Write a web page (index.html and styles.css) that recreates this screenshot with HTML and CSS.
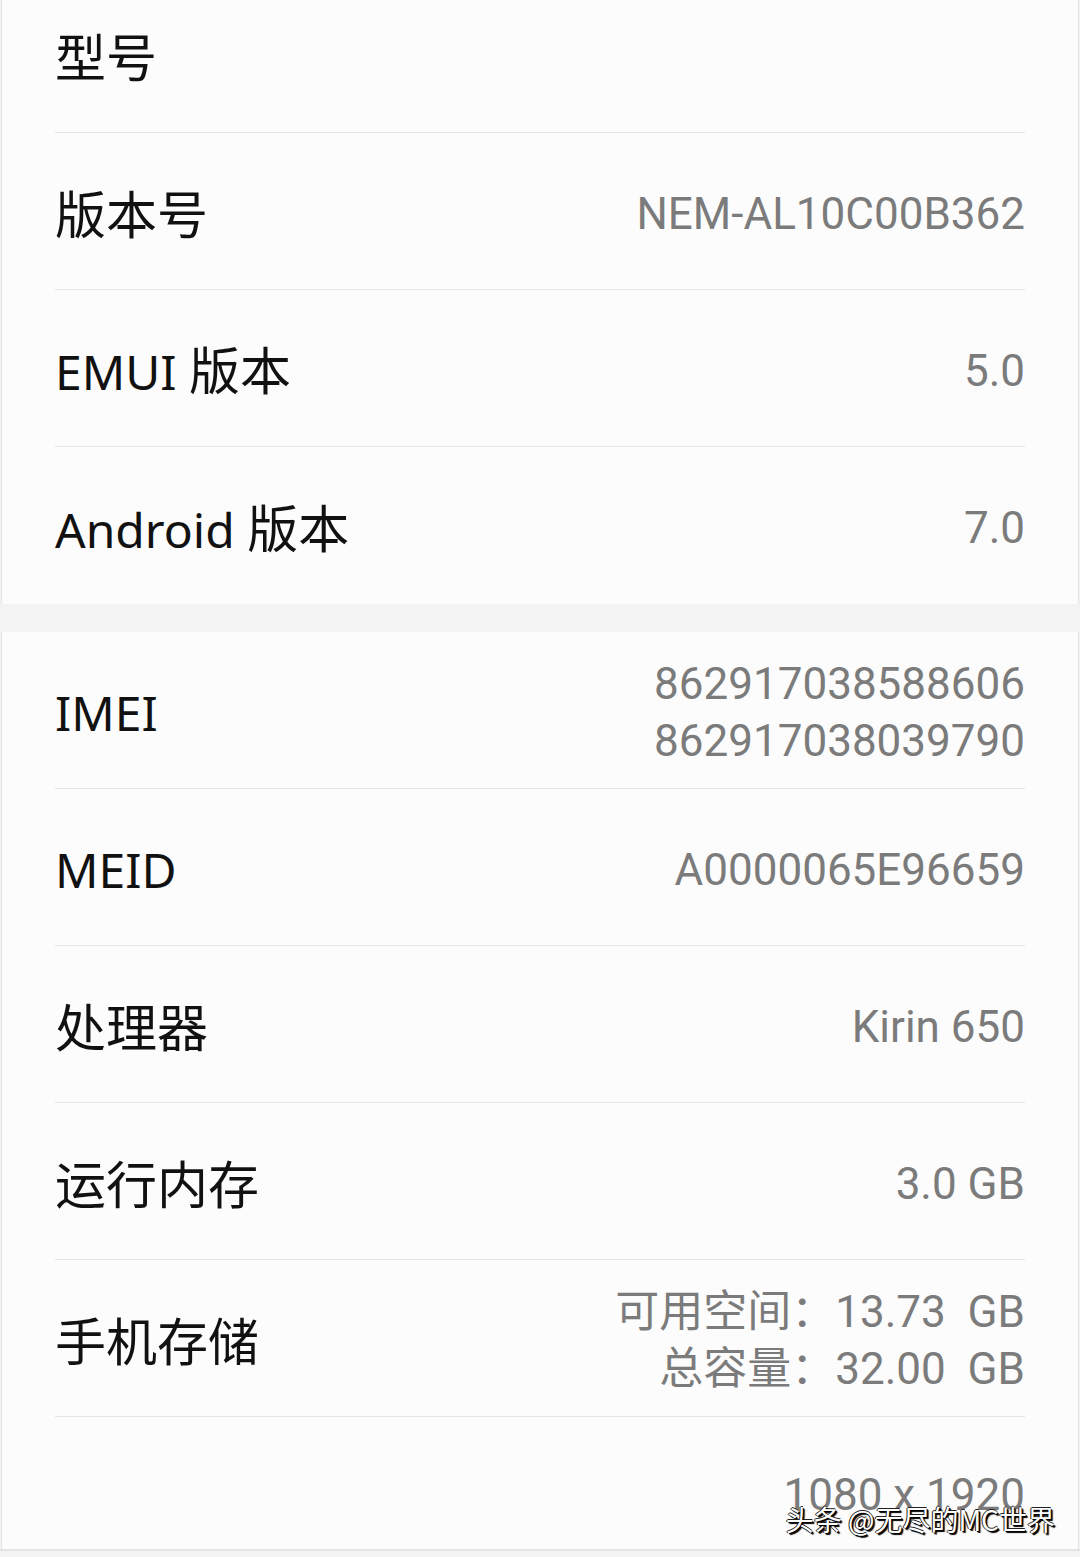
FILE: index.html
```html
<!DOCTYPE html>
<html lang="zh-CN">
<head>
    <meta charset="UTF-8">
    <meta name="viewport" content="width=device-width, initial-scale=1.0">
    <title>关于手机</title>
    <link rel="stylesheet" href="styles.css">
</head>
<body>
    <div class="page">
        <div class="section first">
            <div class="row">
                <span class="label zh">型号</span>
                <span class="value"></span>
            </div>
            <div class="row">
                <span class="label zh">版本号</span>
                <span class="value">NEM-AL10C00B362</span>
            </div>
            <div class="row">
                <span class="label">EMUI <span class="zh">版本</span></span>
                <span class="value">5.0</span>
            </div>
            <div class="row">
                <span class="label">Android <span class="zh">版本</span></span>
                <span class="value">7.0</span>
            </div>
        </div>

        <div class="section">
            <div class="row">
                <span class="label">IMEI</span>
                <div class="value multi">
                    <span>862917038588606</span>
                    <span>862917038039790</span>
                </div>
            </div>
            <div class="row">
                <span class="label">MEID</span>
                <span class="value">A0000065E96659</span>
            </div>
            <div class="row">
                <span class="label zh">处理器</span>
                <span class="value">Kirin 650</span>
            </div>
            <div class="row">
                <span class="label zh">运行内存</span>
                <span class="value">3.0 GB</span>
            </div>
            <div class="row">
                <span class="label zh">手机存储</span>
                <div class="value multi">
                    <span>可用空间：13.73&nbsp; GB</span>
                    <span>总容量：32.00&nbsp; GB</span>
                </div>
            </div>
            <div class="row cut">
                <span class="label"></span>
                <span class="value">1080 x 1920</span>
            </div>
        </div>
    </div>

    <div class="watermark">头条 @无尽的MC世界</div>
</body>
</html>
```

FILE: styles.css
```css
body, html {
    margin: 0;
    padding: 0;
    width: 100%;
    height: 100%;
    overflow: hidden;
    background-color: #f3f3f3;
}
.page {
    margin-top: -24px;
    height: 1573px;
    overflow: hidden;
    border-bottom: 2px solid #e4e4e4;
}
.section {
    background-color: #fcfcfc;
    margin: 0 1px 28px;
    border-left: 1px solid #e4e4e4;
    border-right: 1px solid #e4e4e4;
}
.section:last-child {
    margin-bottom: 0;
}
.row {
    margin: 0 53px;
    height: 157px;
    box-sizing: border-box;
    border-bottom: 1px solid #e6e6e6;
    display: flex;
    align-items: center;
    justify-content: space-between;
    padding-top: 6px;
}
.first .row:last-child {
    border-bottom: none;
}
.row.cut {
    height: 132px;
    border-bottom: none;
    align-items: flex-start;
    padding-top: 50px;
}
.label {
    font-family: "Noto Sans", "Noto Sans CJK SC", sans-serif;
    font-size: 48px;
    color: #111;
    line-height: 56px;
}
.zh {
    font-size: 51px;
}
.value {
    font-family: Roboto, "Noto Sans CJK SC", sans-serif;
    font-size: 44px;
    color: #7b7b7b;
    line-height: 57px;
    text-align: right;
}
.value.multi {
    display: flex;
    flex-direction: column;
    align-items: flex-end;
}
.watermark {
    position: absolute;
    right: 25px;
    bottom: 21px;
    font-family: "Noto Sans CJK SC", sans-serif;
    font-size: 28px;
    line-height: 34px;
    color: #fff;
    text-shadow: 1px 1px 0 #000, -1px 0 0 #222, 0 -1px 0 #222, 2px 2px 1px #000;
}
```
